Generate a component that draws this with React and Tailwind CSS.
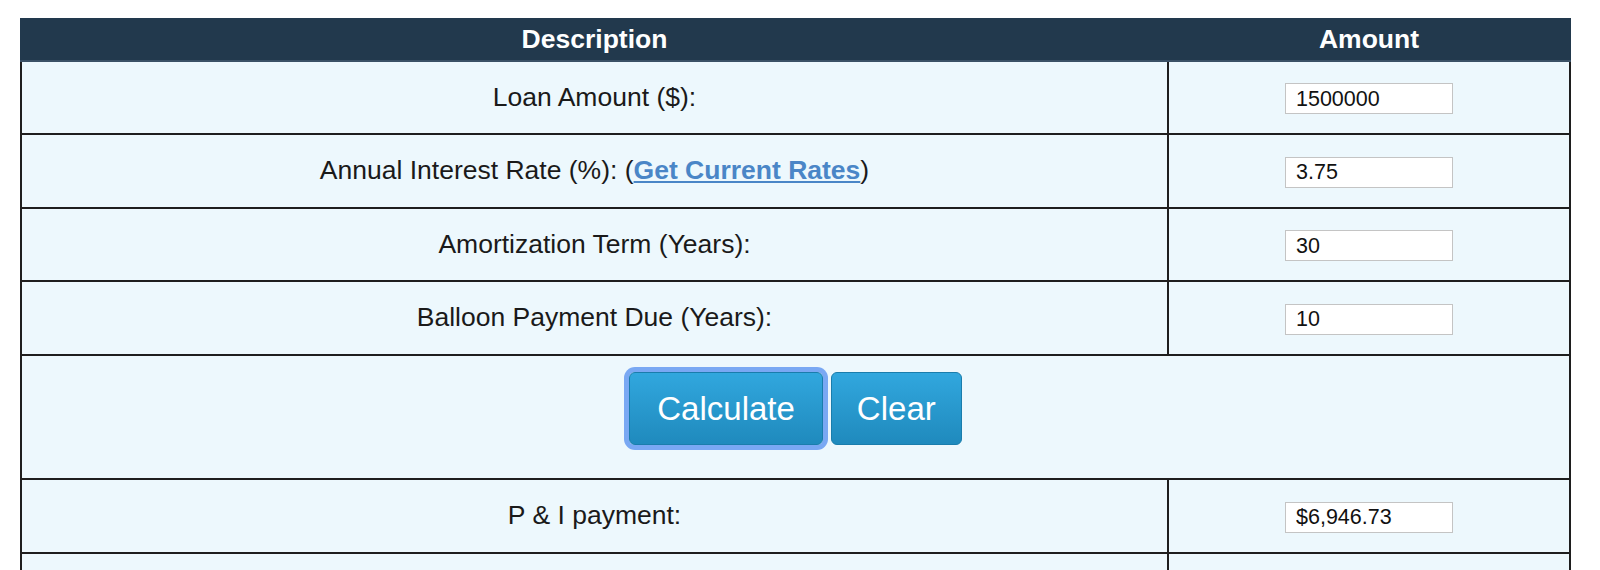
import { useState } from "react";

// Balloon loan calculator table
const rows = [
    { label: "Loan Amount ($):", value: "1500000" },
    { label: "Annual Interest Rate (%):", value: "3.75", link: true },
    { label: "Amortization Term (Years):", value: "30" },
    { label: "Balloon Payment Due (Years):", value: "10" },
];

function InputCell({ value }) {
    return (
        <td className="border-2 border-[#1e1e1e] text-center align-middle">
            <input
                type="text"
                defaultValue={value}
                className="w-[168px] h-[31px] border border-[#c4c4c4] bg-white px-[10px] text-[21.5px] text-[#111] outline-none"
            />
        </td>
    );
}

export default function App() {
    const [focused] = useState(true);

    return (
        <div className="min-h-screen bg-white pl-[20px] pt-[18px] font-['Liberation_Sans',Arial,sans-serif]">
            <table className="w-[1549px] border-collapse table-fixed">
                <colgroup>
                    <col className="w-[1147px]" />
                    <col className="w-[402px]" />
                </colgroup>
                <thead>
                    <tr className="h-[41px] bg-[#22394d] text-white">
                        <th className="text-[26.5px] font-bold border-2 border-[#22394d] border-b-[#3a5166]">Description</th>
                        <th className="text-[26.5px] font-bold border-2 border-[#22394d] border-b-[#3a5166]">Amount</th>
                    </tr>
                </thead>
                <tbody className="bg-[#edf8fd] text-[#1a1a1a] text-[26.5px]">
                    {rows.map((r) => (
                        <tr key={r.label} className="h-[73.5px]">
                            <td className="border-2 border-[#1e1e1e] text-center align-middle">
                                {r.label}
                                {r.link && (
                                    <>
                                        {" "}(
                                        <a href="#" className="font-bold text-[#4a86c7] underline">
                                            Get Current Rates
                                        </a>
                                        )
                                    </>
                                )}
                            </td>
                            <InputCell value={r.value} />
                        </tr>
                    ))}
                    <tr className="h-[124px]">
                        <td colSpan={2} className="border-2 border-[#1e1e1e] align-top pt-[16px]">
                            <div className="flex justify-center gap-[8px]">
                                <button
                                    className={
                                        "h-[73px] px-[27px] rounded-[6px] border border-[#1a7dac] bg-gradient-to-b from-[#31a7de] to-[#1f8abd] text-white text-[33px] " +
                                        (focused ? "shadow-[0_0_0_5px_#79a8f3]" : "")
                                    }
                                >
                                    Calculate
                                </button>
                                <button className="h-[73px] px-[25px] rounded-[6px] border border-[#1a7dac] bg-gradient-to-b from-[#31a7de] to-[#1f8abd] text-white text-[33px]">
                                    Clear
                                </button>
                            </div>
                        </td>
                    </tr>
                    <tr className="h-[74px]">
                        <td className="border-2 border-[#1e1e1e] text-center align-middle">P &amp; I payment:</td>
                        <InputCell value="$6,946.73" />
                    </tr>
                    {/* next row only starts at the bottom edge */}
                    <tr className="h-[74px]">
                        <td className="border-2 border-[#1e1e1e]"></td>
                        <td className="border-2 border-[#1e1e1e]"></td>
                    </tr>
                </tbody>
            </table>
        </div>
    );
}
